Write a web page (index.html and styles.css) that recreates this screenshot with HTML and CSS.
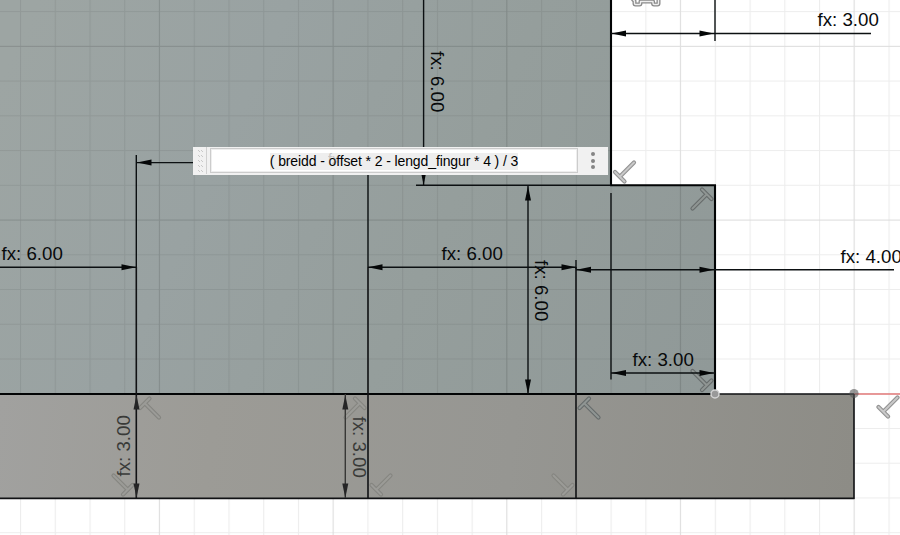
FILE: index.html
```html
<!DOCTYPE html>
<html lang="is">
<head>
<meta charset="utf-8">
<title>Sketch</title>
<link rel="stylesheet" href="styles.css">
</head>
<body>
<main class="canvas">
<svg class="sketch" width="900" height="535" viewBox="0 0 900 535">
  <defs>
    <linearGradient id="upper" gradientUnits="userSpaceOnUse" x1="0" y1="80" x2="700" y2="400">
      <stop offset="0" stop-color="#9da5a3"/><stop offset=".3" stop-color="#99a2a2"/><stop offset=".6" stop-color="#959e9c"/><stop offset="1" stop-color="#909998"/>
    </linearGradient>
    <linearGradient id="lower" gradientUnits="userSpaceOnUse" x1="0" y1="400" x2="850" y2="498">
      <stop offset="0" stop-color="#a1a19f"/><stop offset=".25" stop-color="#9c9b96"/><stop offset=".6" stop-color="#969692"/><stop offset="1" stop-color="#8d8c86"/>
    </linearGradient>
    <pattern id="minor" patternUnits="userSpaceOnUse" x="20" y="11.1" width="34.74" height="34.74">
      <path class="minor" d="M.5 0V34.74M0 .5H34.74"/>
    </pattern>
    <path id="arrow" d="M0 0L-14.5-3V3Z"/>
    <g id="perp">
      <path class="perp-edge" d="M0 0L14-14M-5-4.500L4.500 5"/>
      <path class="perp-core" d="M0 0L14-14M-5-4.500L4.500 5"/>
    </g>
  </defs>

  <path fill="url(#upper)" d="M0 0H611V185H715V394H0Z"/>
  <rect width="900" height="535" fill="url(#minor)"/>
  <path class="major" d="M159.3 0V535M333.1 0V535M506.7 0V535M680.3 0V535M854 0V535M0 46.300H900M0 220.2H900"/>
  <path fill="url(#lower)" d="M0 394H854V498.500H0Z"/>
  <path class="axis" d="M854 394H900"/>

  <g class="perp-light">
    <use href="#perp" x="620" y="176.500"/>
    <use href="#perp" transform="translate(883.500 411.500)"/>
  </g>
  <g class="perp-dark">
    <use href="#perp" transform="translate(706.500 194.500) rotate(180)"/>
    <use href="#perp" transform="translate(584.500 403.500) rotate(90)"/>
    <use href="#perp" transform="translate(706.500 385) rotate(-90)"/>
  </g>
  <g class="perp-faint">
    <use href="#perp" transform="translate(145 403.500) rotate(90)"/>
    <use href="#perp" transform="translate(127.500 489.500) rotate(-90)"/>
    <use href="#perp" transform="translate(359.500 403.500) rotate(180)"/>
    <use href="#perp" transform="translate(376.500 489.500)"/>
    <use href="#perp" transform="translate(567.500 489.500) rotate(-90)"/>
  </g>
  <path class="lock-edge" d="M632.500-1L634.500 1V3.500Q634.500 4.500 635.500 4.500H639.500Q640.500 4.500 640.500 3V1.500H653V3Q653 4.500 654 4.500H657.500Q658.500 4.500 658.500 3.500V-1"/>
  <path class="lock-core" d="M632.500-1L634.500 1V3.500Q634.500 4.500 635.500 4.500H639.500Q640.500 4.500 640.500 3V1.500H653V3Q653 4.500 654 4.500H657.500Q658.500 4.500 658.500 3.500V-1"/>

  <g class="edges">
    <path class="bold" d="M611 0V186M610 185.300H716M715 185V394M0 394H715"/>
    <path class="edge" d="M715 394H854M0 498.400H854.500M854 394V499M136.300 267V499M368 267V499M576 267V499"/>
  </g>
  <g class="dims">
    <path d="M136.300 155V267M136 162.600H200M368 170V267M423.600 0V185M416 185.300H611M528 185V394M0 267.300H136M368 267.300H576M576 260V269M576 269.700H894M611 193V379.500M611 373H715M611 33.500H871M715 0V41"/>
    <path class="muted" d="M345.300 394V498"/>
  </g>
  <g class="arrows">
    <use href="#arrow" x="136" y="267.300"/>
    <use href="#arrow" transform="translate(137 162.600) rotate(180)"/>
    <use href="#arrow" transform="translate(368 267.300) rotate(180)"/>
    <use href="#arrow" x="576" y="267.300"/>
    <use href="#arrow" transform="translate(576.500 269.700) rotate(180)"/>
    <use href="#arrow" x="714" y="269.700"/>
    <use href="#arrow" transform="translate(611.500 373) rotate(180)"/>
    <use href="#arrow" x="714" y="373"/>
    <use href="#arrow" transform="translate(611.500 33.500) rotate(180)"/>
    <use href="#arrow" x="714" y="33.500"/>
    <use href="#arrow" transform="translate(423.600 185) rotate(90)"/>
    <use href="#arrow" transform="translate(528 186) rotate(-90)"/>
    <use href="#arrow" transform="translate(528 394) rotate(90)"/>
  </g>
  <g class="arrows muted-arrows">
    <use href="#arrow" transform="translate(136.500 395) rotate(-90)"/>
    <use href="#arrow" transform="translate(136.500 498) rotate(90)"/>
    <use href="#arrow" transform="translate(345.300 395) rotate(-90)"/>
    <use href="#arrow" transform="translate(345.300 498) rotate(90)"/>
  </g>

  <circle class="end-point" cx="854" cy="393.500" r="4.600"/>
  <circle class="node" cx="715" cy="394" r="4"/>

  <g class="labels">
    <text x="1.500" y="260">fx: 6.00</text>
    <text x="441.500" y="260">fx: 6.00</text>
    <text x="632.500" y="365.500">fx: 3.00</text>
    <text x="817.500" y="26">fx: 3.00</text>
    <text x="840.500" y="262.500">fx: 4.00</text>
    <text transform="translate(430.500 51) rotate(90)">fx: 6.00</text>
    <text transform="translate(535 260) rotate(90)">fx: 6.00</text>
    <text class="muted-text" transform="translate(352.500 416.500) rotate(90)">fx: 3.00</text>
    <text class="muted-text" transform="translate(129.500 476.500) rotate(-90)">fx: 3.00</text>
  </g>
</svg>

<div class="expression">
  <svg class="grip" width="17" height="27" viewBox="0 0 17 27"><path d="M5 3l2 2m1-2l2 2M5 8l2 2m1-2l2 2M5 13l2 2m1-2l2 2M5 18l2 2m1-2l2 2M5 23l2 2m1-2l2 2"/><path class="divider" d="M13.500 0V27"/></svg>
  <div class="field"><span class="formula">( breidd - offset * 2 - lengd_fingur * 4 ) / 3</span><span class="ghost">fx</span></div>
  <div class="menu"><i></i><i></i><i></i></div>
</div>
</main>
</body>
</html>
```
FILE: styles.css
```css
body { margin: 0; background: #fff; font-family: "Liberation Sans", Arial, sans-serif; }
.canvas { position: relative; width: 900px; height: 535px; overflow: hidden; }
.sketch { display: block; }
.minor { stroke: #000; stroke-opacity: .07; stroke-width: 1.2; fill: none; }
.major { stroke: #000; stroke-opacity: .06; stroke-width: 1.2; fill: none; }
.axis { stroke: #e27878; stroke-width: 1.3; }
.bold { stroke: #020405; stroke-width: 2.1; fill: none; }
.edge { stroke: #111214; stroke-width: 1.6; fill: none; }
.dims path { stroke: #0c1012; stroke-width: 1.4; fill: none; }
.dims .muted { stroke: #383836; }
.arrows { fill: #050708; }
.muted-arrows { fill: #252526; }
.perp-edge, .perp-core { fill: none; stroke-linecap: round; }
.perp-edge { stroke-width: 4.2; }
.perp-core { stroke-width: 2; stroke: var(--core); }
.perp-light { stroke: #929292; --core: #c9c9c9; }
.perp-dark { stroke: #666b6b; --core: #8f9593; }
.perp-faint { stroke: #858580; --core: #9b9b97; }
.lock-edge, .lock-core { fill: none; stroke-linejoin: round; }
.lock-edge { stroke: #8a8a8a; stroke-width: 4; }
.lock-core { stroke: #eee; stroke-width: 1.4; }
.end-point { fill: #555; fill-opacity: .6; }
.node { fill: #999; stroke: #d4d4d4; stroke-width: 1.5; }
.labels { font-size: 18.7px; fill: #080a0b; }
.labels .muted-text { fill: #393a38; }
.expression {
  position: absolute; left: 193px; top: 147px; width: 415px; height: 27.500px;
  display: flex; align-items: center; background: #f1f1f1;
}
.grip { flex: none; fill: none; stroke: #c8c8c8; stroke-width: 1; }
.divider { stroke: #d0d0d0; }
.field {
  position: relative; box-sizing: border-box; width: 368px; height: 25px;
  border: 1px solid #ccc; background: #fff; display: flex; align-items: center; justify-content: center;
  box-shadow: inset 0 0 0 1px #eee; padding-top: 1px;
}
.formula { font-size: 14px; line-height: 17px; color: #000; background: #eee; white-space: nowrap; letter-spacing: -.11px; }
.ghost { position: absolute; left: 117px; top: 3px; font-size: 14px; line-height: 14px; color: #777; opacity: .35; }
.menu { flex: 1; display: flex; flex-direction: column; align-items: center; gap: 2.300px; }
.menu i { width: 4px; height: 4px; border-radius: 50%; background: #858585; }
```
